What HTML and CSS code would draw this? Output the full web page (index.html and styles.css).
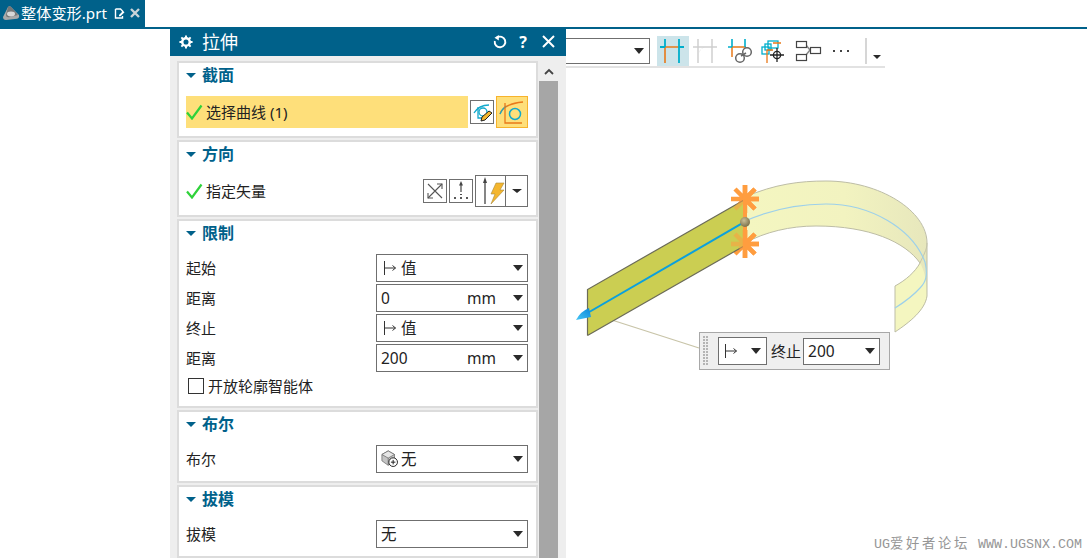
FILE: index.html
```html
<!DOCTYPE html>
<html lang="zh">
<head>
<meta charset="utf-8">
<title>拉伸</title>
<link rel="stylesheet" href="styles.css">
</head>
<body>
<header class="tabbar">
  <div class="tab">
    <svg class="tab-logo" width="18" height="18" viewBox="0 0 18 18"><path d="M1 13 L6 3 Q8 1 10 4 L17 11 Q18 15 13 15 L4 16 Q1 16 1 13Z" fill="#a9a9a9"/><path d="M6 3 L4 11 Q4 14 8 13 L16 11 L10 4 Q8 1 6 3Z" fill="#777"/><ellipse cx="9" cy="10" rx="4" ry="2.4" fill="#d8d8d8"/></svg>
    <span class="tab-name">整体变形.prt</span>
    <svg class="tab-doc" width="11" height="11" viewBox="0 0 11 11"><path d="M1.500 1h5l2 2v1M8.500 8v2h-7V1" fill="none" stroke="#fff" stroke-width="1.400"/><path d="M5 7l4-4 1.500 1.200-4 4H5z" fill="#fff"/></svg>
    <svg class="tab-close" width="10" height="10" viewBox="0 0 10 10"><path d="M1 1l8 8M9 1l-8 8" stroke="#c9d3d8" stroke-width="2.400"/></svg>
  </div>
</header>
<main class="workspace">
  <div class="toolbar">
    <div class="select tool-select"><span class="caret"></span></div>
    <div class="tool tool-active"><svg width="32" height="30" viewBox="0 0 32 30"><path d="M8 11h14M8 11v16" stroke="#e8791a" stroke-width="1.600" fill="none"/><path d="M8 3v8M22 3v24M3 11h5M22 11h5" stroke="#00aecb" stroke-width="1.800" fill="none"/></svg></div>
    <div class="tool"><svg width="32" height="30" viewBox="0 0 32 30"><path d="M7 3v24M21 3v24M2 11h24" stroke="#cfcfcf" stroke-width="1.500" fill="none"/><path d="M8 17q1-5 6-6l-4 2z" fill="#cfcfcf"/></svg></div>
    <div class="tool"><svg width="32" height="30" viewBox="0 0 32 30"><path d="M7 11h14M7 11v10" stroke="#e8791a" stroke-width="1.500" fill="none"/><path d="M7 3v8M3 11h4M20 3v8" stroke="#00aecb" stroke-width="1.600" fill="none"/><circle cx="22" cy="16" r="4.300" fill="none" stroke="#666" stroke-width="1.500"/><circle cx="15" cy="22" r="4.300" fill="none" stroke="#666" stroke-width="1.500"/><path d="M16 20l5-3" stroke="#666" stroke-width="1.500"/></svg></div>
    <div class="tool"><svg width="32" height="30" viewBox="0 0 32 30"><rect x="3" y="11" width="7" height="7" fill="none" stroke="#00aecb" stroke-width="1.300"/><rect x="6" y="8" width="6" height="6" fill="none" stroke="#00aecb" stroke-width="1.300"/><rect x="9" y="5" width="10" height="7" fill="none" stroke="#00aecb" stroke-width="1.300"/><path d="M8 14v13M8 14h6M14 7h8" stroke="#e8791a" stroke-width="1.300" fill="none"/><circle cx="18" cy="19" r="3.600" fill="none" stroke="#222" stroke-width="1.300"/><path d="M18 12v14M11 19h14" stroke="#222" stroke-width="1.300"/></svg></div>
    <div class="tool"><svg width="32" height="30" viewBox="0 0 32 30"><path d="M13 9l4 5-4 5" stroke="#888" stroke-width="1.500" fill="none"/><rect x="3.500" y="5.500" width="10" height="6" fill="#fff" stroke="#444" stroke-width="1.200"/><rect x="3.500" y="18.500" width="10" height="6" fill="#fff" stroke="#444" stroke-width="1.200"/><rect x="17.500" y="11.500" width="10" height="6" fill="#fff" stroke="#444" stroke-width="1.200"/></svg></div>
    <div class="tool"><svg width="32" height="30" viewBox="0 0 32 30"><path d="M6 15h2M13 15h2M20 15h2" stroke="#444" stroke-width="2" fill="none"/></svg></div>
    <div class="tool-sep"></div>
    <span class="caret caret-small"></span>
  </div>

  <svg class="scene" width="1087" height="558" viewBox="0 0 1087 558">
    <defs>
      <linearGradient id="band" x1="745" y1="0" x2="927" y2="0" gradientUnits="userSpaceOnUse">
        <stop offset="0" stop-color="#f4f6c0"/><stop offset=".55" stop-color="#f2f3c0"/><stop offset="1" stop-color="#e7e7bc"/>
      </linearGradient>
      <radialGradient id="ball" cx=".4" cy=".35" r=".7"><stop offset="0" stop-color="#c9bf96"/><stop offset="1" stop-color="#776c46"/></radialGradient>
      <linearGradient id="cone" x1="0" y1="1" x2="1" y2="0"><stop offset="0" stop-color="#46c6f5"/><stop offset="1" stop-color="#0a86d8"/></linearGradient>
    </defs>
    <path d="M745 197C775 184 800 181 826 181C880 181 927 211 927 243V296C925 310 910 322 895 332V286C906 280 915 272 920 263C905 242 870 226 816 226C790 226 765 232 745 243Z" fill="url(#band)"/>
    <path d="M895 286C906 280 915 272 920 263C924 270 927 280 927 296C925 310 910 322 895 332Z" fill="#f4f6c0"/>
    <path d="M745 197C775 184 800 181 826 181C880 181 927 211 927 243V296C925 310 910 322 895 332V286C906 280 915 272 920 263C905 242 870 226 816 226C790 226 765 232 745 243" fill="none" stroke="#bdbda6" stroke-width="1"/>
    <path d="M920 263C923 256 927 250 927 243" fill="none" stroke="#c5c5ac" stroke-width="1"/>
    <path d="M745 221C775 208 800 204 826 204C870 204 912 228 925 262C928 275 926 282 920 288C912 297 903 303 895 308" fill="none" stroke="#9dd0ea" stroke-width="1.200"/>
    <path class="leader" d="M590 313L699 348"/>
    <g class="star"><path d="M745 185v28M731 199h28M735 189l20 20M755 189l-20 20"/><path d="M745 230v28M731 244h28M735 234l20 20M755 234l-20 20"/></g>
    <path d="M587.500 289.500L744 200V246L587.500 335.500Z" fill="#cbce52"/>
    <path d="M587.500 335.500V289.500L744 200M587.500 335.500L744 246" fill="none" stroke="#6b6b58" stroke-width="1.200"/>
    <g class="star-under"><path d="M745 199l-10 10M745 244h-14M745 244l-10-10M745 244l-5 5"/></g>
    <path d="M745 199v45" stroke="#ff9d3f" stroke-width="4"/>
    <path d="M745 185v14M745 199l10-10M745 199h14M745 199l10 10M745 244l10-10M745 244h14M745 244l10 10M745 244v14M745 230v14" stroke="#ff9d3f" stroke-width="4.500"/>
    <path d="M587.500 313L745 221.700" stroke="#0aa0de" stroke-width="2"/>
    <path d="M576 320Q581 311 589 308L591 317Z" fill="url(#cone)"/>
    <circle cx="745" cy="222" r="5" fill="url(#ball)"/>
  </svg>

  <section class="dialog">
    <div class="dialog-title">
      <svg class="gear" width="14" height="14" viewBox="0 0 16 16"><circle cx="8" cy="8" r="4.300" fill="none" stroke="#fff" stroke-width="2.800"/><path d="M8 .5v3M8 12.500v3M.5 8h3M12.500 8h3M2.700 2.700l2.100 2.100M11.200 11.200l2.100 2.100M13.300 2.700l-2.100 2.100M4.800 11.200l-2.100 2.100" stroke="#fff" stroke-width="2.200"/></svg>
      <span class="dialog-name">拉伸</span>
      <svg class="reset" width="14" height="14" viewBox="0 0 14 14"><path d="M4 2.600A5.300 5.300 0 1 1 1.800 6" fill="none" stroke="#fff" stroke-width="1.900"/><path d="M5.800 0v5.500L1.500 2.800z" fill="#fff"/></svg>
      <span class="help">?</span>
      <svg class="dclose" width="13" height="13" viewBox="0 0 13 13"><path d="M1 1l11 11M12 1L1 12" stroke="#fff" stroke-width="2"/></svg>
    </div>
    <div class="dialog-body">
      <div class="groups">
        <div class="group">
          <div class="group-head"><span class="tri"></span><span>截面</span></div>
          <div class="group-body">
            <div class="row">
              <div class="pick">
                <svg class="check" width="17" height="16" viewBox="0 0 17 16"><path d="M1 8.500L6 14.500L15.500 1.500" fill="none" stroke="#2fd23a" stroke-width="2.200"/></svg>
                <span>选择曲线 (1)</span>
              </div>
              <div class="icon-btn icon-btn-curve"><svg width="22" height="22" viewBox="0 0 22 22"><path d="M3 12Q8 4 18 4" fill="none" stroke="#12a9cc" stroke-width="1.300"/><path d="M7 6V17H14" fill="none" stroke="#12a9cc" stroke-width="1.300"/><circle cx="12" cy="11" r="4" fill="none" stroke="#12a9cc" stroke-width="1.300"/><path d="M10 20l1-4 7-6 3 2-7 7z" fill="#f4b62e" stroke="#222" stroke-width="1"/></svg></div>
              <div class="icon-btn-on"><svg width="30" height="30" viewBox="0 0 30 30"><path d="M3 17Q6 7 26 5" fill="none" stroke="#e8791a" stroke-width="1.300"/><path d="M3 17Q5 12 9 9" fill="none" stroke="#12a9cc" stroke-width="1.300"/><path d="M8 6V26H25" fill="none" stroke="#e8791a" stroke-width="1.300"/><circle cx="18" cy="17" r="5.500" fill="none" stroke="#12a9cc" stroke-width="1.500"/></svg></div>
            </div>
          </div>
        </div>
        <div class="group">
          <div class="group-head"><span class="tri"></span><span>方向</span></div>
          <div class="group-body">
            <div class="row">
              <svg class="check" width="17" height="16" viewBox="0 0 17 16"><path d="M1 8.500L6 14.500L15.500 1.500" fill="none" stroke="#2fd23a" stroke-width="2.200"/></svg>
              <span>指定矢量</span>
              <div class="icon-btn icon-btn-first"><svg width="22" height="22" viewBox="0 0 22 22"><path d="M4 4l14 14M18 4L4 18" stroke="#555" stroke-width="1.100"/><path d="M13 4h5v5M4 13v5h5" fill="none" stroke="#555" stroke-width="1.100"/></svg></div>
              <div class="icon-btn"><svg width="22" height="22" viewBox="0 0 22 22"><path d="M11 4v8" stroke="#444" stroke-width="1.200"/><path d="M11 1l2 4.500h-4z" fill="#444"/><path d="M4 18h2M10 18h2M16 18h2M11 14v1" stroke="#222" stroke-width="1.600"/></svg></div>
              <div class="split">
                <div class="split-main"><svg width="30" height="30" viewBox="0 0 30 30"><path d="M9 6v22" stroke="#444" stroke-width="1.300"/><path d="M9 1l2 6H7z" fill="#444"/><path d="M20 7h8l-4 7h4L15 28l4-10h-4z" fill="#f4b62e" stroke="#a88a3a" stroke-width=".6"/></svg></div>
                <div class="split-arrow"><span class="caret caret-mid"></span></div>
              </div>
            </div>
          </div>
        </div>
        <div class="group">
          <div class="group-head"><span class="tri"></span><span>限制</span></div>
          <div class="group-body rows">
            <div class="row-field"><span>起始</span>
              <div class="select field"><svg class="limit" width="14" height="14" viewBox="0 0 14 14"><path d="M1.500 0v14M1.500 7h11M9.500 4.500L12.500 7L9.500 9.500" fill="none" stroke="#333" stroke-width="1"/></svg><span class="val">值</span><span class="caret"></span></div></div>
            <div class="row-field"><span>距离</span>
              <div class="select field field-num"><span class="val">0</span><span class="unit">mm</span><span class="caret"></span></div></div>
            <div class="row-field"><span>终止</span>
              <div class="select field"><svg class="limit" width="14" height="14" viewBox="0 0 14 14"><path d="M1.500 0v14M1.500 7h11M9.500 4.500L12.500 7L9.500 9.500" fill="none" stroke="#333" stroke-width="1"/></svg><span class="val">值</span><span class="caret"></span></div></div>
            <div class="row-field"><span>距离</span>
              <div class="select field field-num"><span class="val">200</span><span class="unit">mm</span><span class="caret"></span></div></div>
            <div class="check-row"><span class="box"></span><span>开放轮廓智能体</span></div>
          </div>
        </div>
        <div class="group">
          <div class="group-head"><span class="tri"></span><span>布尔</span></div>
          <div class="group-body">
            <div class="row-field"><span>布尔</span>
              <div class="select field"><svg class="cube" width="18" height="18" viewBox="0 0 20 20"><path d="M1 5l7-4 7 4v7l-7 5-7-5z" fill="#c4c4c4" stroke="#666" stroke-width=".8"/><path d="M1 5l7 4 7-4-7-4z" fill="#e6e6e6" stroke="#666" stroke-width=".8"/><path d="M8 9v8" stroke="#666" stroke-width=".8"/><circle cx="13.500" cy="13.500" r="4.800" fill="#fff" stroke="#222" stroke-width="1.100"/><path d="M13.500 11v5M11 13.500h5" stroke="#222" stroke-width="1.100"/></svg><span class="val">无</span><span class="caret"></span></div></div>
          </div>
        </div>
        <div class="group">
          <div class="group-head"><span class="tri"></span><span>拔模</span></div>
          <div class="group-body">
            <div class="row-field"><span>拔模</span>
              <div class="select field field-num"><span class="val">无</span><span class="caret"></span></div></div>
          </div>
        </div>
      </div>
      <div class="scrollbar">
        <div class="scroll-up"><svg width="10" height="7" viewBox="0 0 10 7"><path d="M1 6l4-4 4 4" fill="none" stroke="#444" stroke-width="1.800"/></svg></div>
        <div class="scroll-thumb"></div>
      </div>
    </div>
  </section>

  <div class="popup">
    <div class="grip"></div>
    <div class="select pop-limit"><svg class="limit" width="14" height="14" viewBox="0 0 14 14"><path d="M1.500 0v14M1.500 7h11M9.500 4.500L12.500 7L9.500 9.500" fill="none" stroke="#333" stroke-width="1"/></svg><span class="caret"></span></div>
    <span class="pop-label">终止</span>
    <div class="select pop-val"><span class="val">200</span><span class="caret"></span></div>
  </div>

  <div class="watermark">UG<span class="wm-cjk">爱好者论坛</span> WWW.UGSNX.COM</div>
</main>
</body>
</html>
```

FILE: styles.css
```css
* { box-sizing: border-box; }
html, body { margin: 0; height: 100%; }
body {
  width: 1087px;
  height: 558px;
  overflow: hidden;
  background: #fff;
  color: #222;
  font: 15px/20px "Noto Sans", "Noto Sans CJK SC", sans-serif;
}
svg { display: block; flex: none; }

.tabbar {
  height: 29px;
  border-bottom: 2px solid #00618a;
  display: flex;
}
.tab {
  width: 145px;
  height: 27px;
  background: #00618a;
  color: #fff;
  display: flex;
  align-items: center;
  padding: 0 0 1px 2px;
}
.tab-name { margin-left: 1px; width: 93px; white-space: nowrap; font-size: 15.200px; }
.tab-close { margin-left: 5px; }

.workspace { position: relative; height: 529px; }

.toolbar {
  margin-left: 500px;
  width: 385px;
  height: 39px;
  padding-top: 7px;
  border-bottom: 2px solid #e2e2e2;
  display: flex;
  align-items: flex-start;
  gap: 2px;
}
.tool-select { width: 150px; height: 26px; margin: 2px 5px 0 0; justify-content: flex-end; padding-right: 5px; }
.tool { width: 32px; height: 30px; }
.tool-active { background: #cce4ea; }
.tool-sep { width: 2px; height: 26px; margin: 2px 0 0 4px; background: #d6d6d6; }

.caret {
  width: 0; height: 0;
  flex: none;
  border-left: 5.500px solid transparent;
  border-right: 5.500px solid transparent;
  border-top: 6px solid #2a2a2a;
}
.caret-small { margin: 19px 0 0 4px; border-left-width: 4px; border-right-width: 4px; border-top-width: 4px; }
.caret-mid { border-left-width: 5px; border-right-width: 5px; border-top-width: 4px; }

.scene { position: absolute; left: 0; top: -29px; }
.leader { stroke: #c8c4a8; stroke-width: 1.300; fill: none; }
.star path { stroke: #ff9d3f; stroke-width: 4.500; fill: none; }
.star-under path { stroke: #ff9d3f; stroke-opacity: .55; stroke-width: 4.500; fill: none; }

.dialog {
  position: absolute;
  left: 170px;
  top: 0;
  width: 396px;
  height: 529px;
  background: #eee;
  overflow: hidden;
}
.dialog-title {
  height: 27px;
  background: #00618a;
  color: #fff;
  display: flex;
  align-items: center;
  padding: 0 11px 2px 9px;
}
.dialog-name { margin-left: 9px; font-size: 18px; flex: 1; }
.gear { margin-top: 1px; }
.help { width: 12px; margin-left: 10px; font-weight: 700; font-size: 16px; text-align: center; }
.dclose { margin-left: 13px; }

.dialog-body { display: flex; padding: 5px 8px 0 7px; gap: 1px; height: 502px; }
.groups { width: 361px; display: flex; flex-direction: column; gap: 2px; flex: none; }
.group { background: #fff; border: 2px solid #dcdcdc; padding: 0 8px 8px 7px; }
.group-head {
  height: 24px;
  margin-bottom: 2px;
  display: flex;
  align-items: center;
  color: #00618a;
  font-weight: 700;
  font-size: 16px;
}
.tri {
  width: 0; height: 0;
  margin: 0 6px 0 0;
  border-left: 5px solid transparent;
  border-right: 5px solid transparent;
  border-top: 5px solid #00618a;
}
.group-body { padding-top: 7px; }
.row { height: 32px; display: flex; align-items: center; }
.rows { display: flex; flex-direction: column; gap: 2px; }

.pick {
  width: 282px;
  height: 32px;
  background: #fedf7a;
  display: flex;
  align-items: center;
  gap: 3px;
}
.check { margin-right: 3px; }
.pick .check { margin-right: 0; }
.icon-btn {
  width: 24px; height: 24px;
  border: 1px solid #6f6f6f;
  background: #fff;
  margin-left: 2px;
  display: flex; align-items: center; justify-content: center;
}
.icon-btn-curve { margin-right: 2px; }
.icon-btn-first { margin-left: auto; }
.icon-btn-on {
  width: 32px; height: 32px;
  border: 1px solid #f7b32c;
  background: #fedf7a;
}
.split {
  width: 53px; height: 32px;
  margin-left: 2px;
  border: 1px solid #6f6f6f;
  display: flex;
}
.split-main { width: 30px; border-right: 1px solid #6f6f6f; }
.split-arrow { flex: 1; display: flex; align-items: center; justify-content: center; }

.select {
  border: 1px solid #6f6f6f;
  background: #fff;
  display: flex;
  align-items: center;
}
.row-field { height: 28px; display: flex; align-items: center; justify-content: space-between; }
.field { width: 152px; height: 28px; padding: 0 4px 0 6px; }
.field .caret, .pop-limit .caret, .pop-val .caret { margin-left: auto; }
.field-num { padding-left: 4px; }
.val { font-size: 15.500px; }
.limit { margin-right: 4px; }
.cube { margin-left: -2px; margin-right: 2px; }
.unit { margin-left: auto; margin-right: 17px; font-size: 15.500px; }
.unit + .caret { margin-left: 0; }
.check-row { height: 24px; display: flex; align-items: center; margin-left: 2px; }
.box { width: 16px; height: 16px; border: 1px solid #333; background: #fff; margin-right: 4px; }

.scrollbar { width: 19px; display: flex; flex-direction: column; }
.scroll-up { height: 20px; display: flex; align-items: center; justify-content: center; }
.scroll-thumb { flex: 1; background: #a6a6a6; }

.popup {
  position: absolute;
  left: 699px;
  top: 303px;
  width: 191px;
  height: 38px;
  background: #efefef;
  border: 1px solid #a8a8a8;
  display: flex;
  align-items: center;
  padding-left: 3px;
}
.grip {
  width: 6px;
  height: 30px;
  background-image: radial-gradient(circle at 1px 1px, #b4b4b4 1px, transparent 1.200px);
  background-size: 3px 3px;
  margin-right: 9px;
}
.pop-limit { width: 49px; height: 28px; padding: 0 5px 0 5px; }
.pop-limit .limit { margin: 0; }
.pop-label { margin: 0 2px 0 4px; }
.pop-val { width: 77px; height: 27px; padding: 0 4px 0 4px; }

.watermark {
  position: absolute;
  right: 5px;
  bottom: 5px;
  color: #969696;
  font: 13.330px/16px "Liberation Mono", "Noto Sans CJK SC", monospace;
  white-space: pre;
}
.wm-cjk { letter-spacing: 2.670px; }
```
